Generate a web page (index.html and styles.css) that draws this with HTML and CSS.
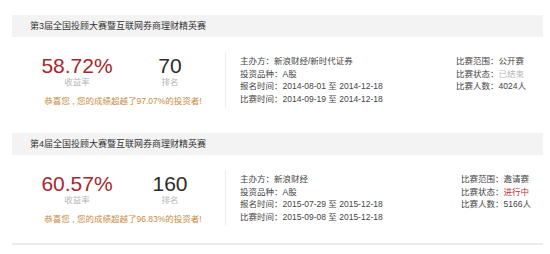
FILE: index.html
```html
<!DOCTYPE html>
<html lang="zh">
<head>
<meta charset="utf-8">
<link rel="stylesheet" href="styles.css">
</head>
<body>
<div class="page">
  <section class="contest">
    <div class="bar">第3届全国投顾大赛暨互联网券商理财精英赛</div>
    <div class="content">
      <div class="stats">
        <div class="nums">
          <div class="stat">
            <div class="big red">58.72%</div>
            <div class="label">收益率</div>
          </div>
          <div class="stat">
            <div class="big">70</div>
            <div class="label">排名</div>
          </div>
        </div>
        <div class="msg">恭喜您 , 您的成绩超越了97.07%的投资者!</div>
      </div>
      <div class="info">
        <div>主办方：新浪财经/新时代证券</div>
        <div>投资品种：A股</div>
        <div>报名时间：2014-08-01 至 2014-12-18</div>
        <div>比赛时间：2014-09-19 至 2014-12-18</div>
      </div>
      <div class="side">
        <div>比赛范围：公开赛</div>
        <div>比赛状态：<span class="done">已结束</span></div>
        <div>比赛人数：4024人</div>
      </div>
    </div>
  </section>
  <section class="contest last">
    <div class="bar">第4届全国投顾大赛暨互联网券商理财精英赛</div>
    <div class="content">
      <div class="stats">
        <div class="nums">
          <div class="stat">
            <div class="big red">60.57%</div>
            <div class="label">收益率</div>
          </div>
          <div class="stat">
            <div class="big">160</div>
            <div class="label">排名</div>
          </div>
        </div>
        <div class="msg">恭喜您 , 您的成绩超越了96.83%的投资者!</div>
      </div>
      <div class="info">
        <div>主办方：新浪财经</div>
        <div>投资品种：A股</div>
        <div>报名时间：2015-07-29 至 2015-12-18</div>
        <div>比赛时间：2015-09-08 至 2015-12-18</div>
      </div>
      <div class="side shift">
        <div>比赛范围：邀请赛</div>
        <div>比赛状态：<span class="live">进行中</span></div>
        <div>比赛人数：5166人</div>
      </div>
    </div>
  </section>
</div>
</body>
</html>
```

FILE: styles.css
```css
html, body {
  margin: 0;
  padding: 0;
  background: #ffffff;
}
body {
  font-family: "Liberation Sans", "Noto Sans CJK SC", sans-serif;
  color: #444;
}
.page {
  width: 531px;
  margin-left: 12px;
  padding-top: 15px;
}
.contest {
  margin-bottom: 25px;
}
.contest.last {
  margin-bottom: 0;
  padding-bottom: 17px;
  border-bottom: 2px solid #ececec;
}
.bar {
  height: 22px;
  line-height: 22px;
  background: #f3f3f3;
  padding-left: 18px;
  font-size: 9px;
  color: #333;
}
.content {
  display: flex;
  padding-top: 15px;
}
.stats {
  width: 186px;
  margin-left: 18px;
  margin-right: 9px;
  padding-top: 3px;
}
.nums {
  display: flex;
}
.stat {
  text-align: center;
}
.stat:first-child {
  width: 94px;
}
.stat:last-child {
  width: 92px;
}
.big {
  font-size: 21px;
  line-height: 22px;
  color: #2b2b2b;
}
.big.red {
  color: #a8262d;
}
.label {
  font-size: 8.5px;
  line-height: 10px;
  color: #b5b5b5;
}
.msg {
  margin-top: 8px;
  font-size: 8.5px;
  line-height: 12px;
  text-align: center;
  color: #c98a45;
}
.info {
  width: 216px;
  height: 53px;
  border-left: 1px solid #ededed;
  padding-left: 14px;
  padding-top: 3px;
  font-size: 8.5px;
  line-height: 12.7px;
  color: #444;
}
.side {
  padding-top: 3px;
  font-size: 8.5px;
  line-height: 12.7px;
  color: #444;
}
.side.shift {
  margin-left: 5px;
}
.done {
  color: #b8b8b8;
}
.live {
  color: #c0343a;
}
```
